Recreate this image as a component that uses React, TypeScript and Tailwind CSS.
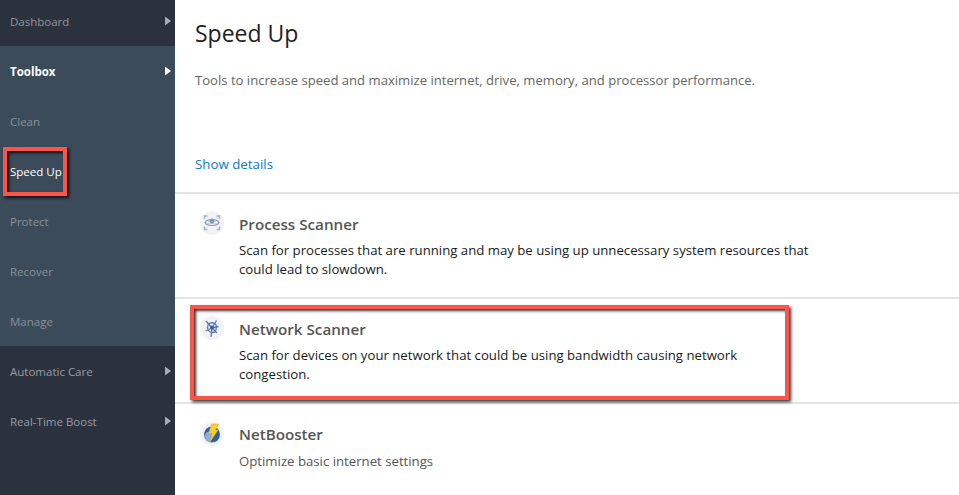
import { ReactNode } from 'react';

function Arrow({ light }: { light?: boolean }) {
  return (
    <svg width="6" height="9" viewBox="0 0 6 9" className="absolute left-[165px] top-1/2 -translate-y-1/2">
      <path d="M0 0L6 4.5L0 9Z" fill={light ? '#ffffff' : '#a9afb6'} />
    </svg>
  );
}

function NavRow({ label, className, arrow, light }: { label: string; className: string; arrow?: boolean; light?: boolean }) {
  return (
    <div className={`relative flex h-[50px] items-center pl-[10px] pt-[2px] text-[11.5px] ${className}`}>
      {label}
      {arrow && <Arrow light={light} />}
    </div>
  );
}

function ProcessIcon() {
  return (
    <svg width="24" height="24" viewBox="0 0 24 24" fill="none">
      <circle cx="12" cy="12" r="12" fill="#f3f3f5" />
      <path d="M4.5 7.5V5H7.5M16.5 5H19.5V7.5M4.5 15.5V18.5H7.5M16.5 18.5H19.5V15.5" stroke="#a3b3d2" strokeWidth="1.6" />
      <path d="M5 11.5C7 7.5 17 7.5 19 11.5C17 15.5 7 15.5 5 11.5Z" stroke="#7c92bf" strokeWidth="1.1" />
      <path d="M8.5 10.5H15.5M7.5 12.5H16.5" stroke="#9aacd0" strokeWidth="0.9" strokeDasharray="1.2 0.8" />
      <circle cx="12" cy="10" r="2.4" fill="#7f95c2" />
    </svg>
  );
}

function NetworkIcon() {
  return (
    <svg width="24" height="24" viewBox="0 0 24 24" fill="none">
      <circle cx="12" cy="12" r="12" fill="#f3f3f5" />
      <g stroke="#5c79b3" strokeWidth="1.3">
        <path d="M12 12L6 5M12 12L16.5 4.5M12 12L18.5 10.5M12 12L17 17M12 12L11 21M12 12L5.5 15" />
        <path d="M8 9C9.5 6 14.5 6 16 9C17.5 12 15.5 16.5 12.5 16.5C9 16.5 6.5 13 8 9Z" />
      </g>
      <circle cx="12" cy="11.5" r="2" fill="#3f5c9a" />
    </svg>
  );
}

function BoosterIcon() {
  return (
    <svg width="24" height="24" viewBox="0 0 24 24" fill="none" className="mt-[1px]">
      <circle cx="12" cy="12" r="12" fill="#f3f3f5" />
      <circle cx="12" cy="12.5" r="8" fill="#2f5ea8" />
      <path d="M5 13C6 9.5 9.5 9 11 11C13 13.5 12 18 9.5 20C6.5 19 4.5 16 5 13Z" fill="#8fb0d8" />
      <path d="M11.5 2H18.5L15.5 8H18L10 20L12 11.5H8.5Z" fill="#f7cf2f" stroke="#e5a812" strokeWidth="0.5" />
    </svg>
  );
}

function Tool({ icon, title, children, className }: { icon: ReactNode; title: string; children: ReactNode; className: string }) {
  return (
    <section className={`flex border-t-2 border-[#e4e4e4] pl-[25px] ${className}`}>
      <div className="w-[39px] shrink-0 pt-[17px]">{icon}</div>
      <div className="w-[571px] pt-[20px]">
        <h2 className="text-[15.2px] leading-[20px] font-semibold text-[#555555]">{title}</h2>
        <div className="mt-[7px] text-[13.2px] leading-[19px] text-[#1a1a1a]">{children}</div>
      </div>
    </section>
  );
}

export default function App() {
  return (
    <div className="relative flex h-[495px] w-[959px] overflow-hidden bg-white font-['Open_Sans',sans-serif]">
      <aside className="h-full w-[175px] shrink-0 bg-[#2c323d]">
        <NavRow label="Dashboard" className="-mt-[4px] text-[#8f959e]" arrow />
        <div className="bg-[#3c4b5a]">
          <NavRow label="Toolbox" className="font-bold text-white" arrow light />
          <NavRow label="Clean" className="text-[#87919c]" />
          <NavRow label="Speed Up" className="text-white" />
          <NavRow label="Protect" className="text-[#87919c]" />
          <NavRow label="Recover" className="text-[#87919c]" />
          <NavRow label="Manage" className="text-[#87919c]" />
        </div>
        <NavRow label="Automatic Care" className="text-[#959ca6]" arrow />
        <NavRow label="Real-Time Boost" className="text-[#959ca6]" arrow />
      </aside>

      <main className="min-w-0 flex-1">
        <div className="h-[192px] pl-[20px]">
          <h1 className="pt-[15px] text-[23px] leading-[36px] text-[#222222]">Speed Up</h1>
          <p className="mt-[20px] text-[13.1px] leading-[19px] text-[#666666]">
            Tools to increase speed and maximize internet, drive, memory, and processor performance.
          </p>
          <a className="mt-[65px] block text-[13.3px] leading-[19px] text-[#0b7cc0]">Show details</a>
        </div>
        <Tool icon={<ProcessIcon />} title="Process Scanner" className="h-[105px]">
          Scan for processes that are running and may be using up unnecessary system resources that could lead to slowdown.
        </Tool>
        <Tool icon={<NetworkIcon />} title="Network Scanner" className="h-[105px]">
          Scan for devices on your network that could be using bandwidth causing network congestion.
        </Tool>
        <Tool icon={<BoosterIcon />} title="NetBooster" className="h-[93px]">
          <p className="pt-[1px] text-[#555555]">Optimize basic internet settings</p>
        </Tool>
      </main>

      <div className="pointer-events-none absolute left-[3px] top-[147px] h-[49px] w-[64px] border-[4px] border-[#fb5549] shadow-[2px_2px_3px_rgba(0,0,0,0.8),inset_2px_2px_3px_rgba(0,0,0,0.8)]" />
      <div className="pointer-events-none absolute left-[190px] top-[305px] h-[95px] w-[599px] border-[4px] border-[#fb5549] shadow-[2px_2px_3px_rgba(0,0,0,0.8),inset_2px_2px_3px_rgba(0,0,0,0.8)]" />
    </div>
  );
}
